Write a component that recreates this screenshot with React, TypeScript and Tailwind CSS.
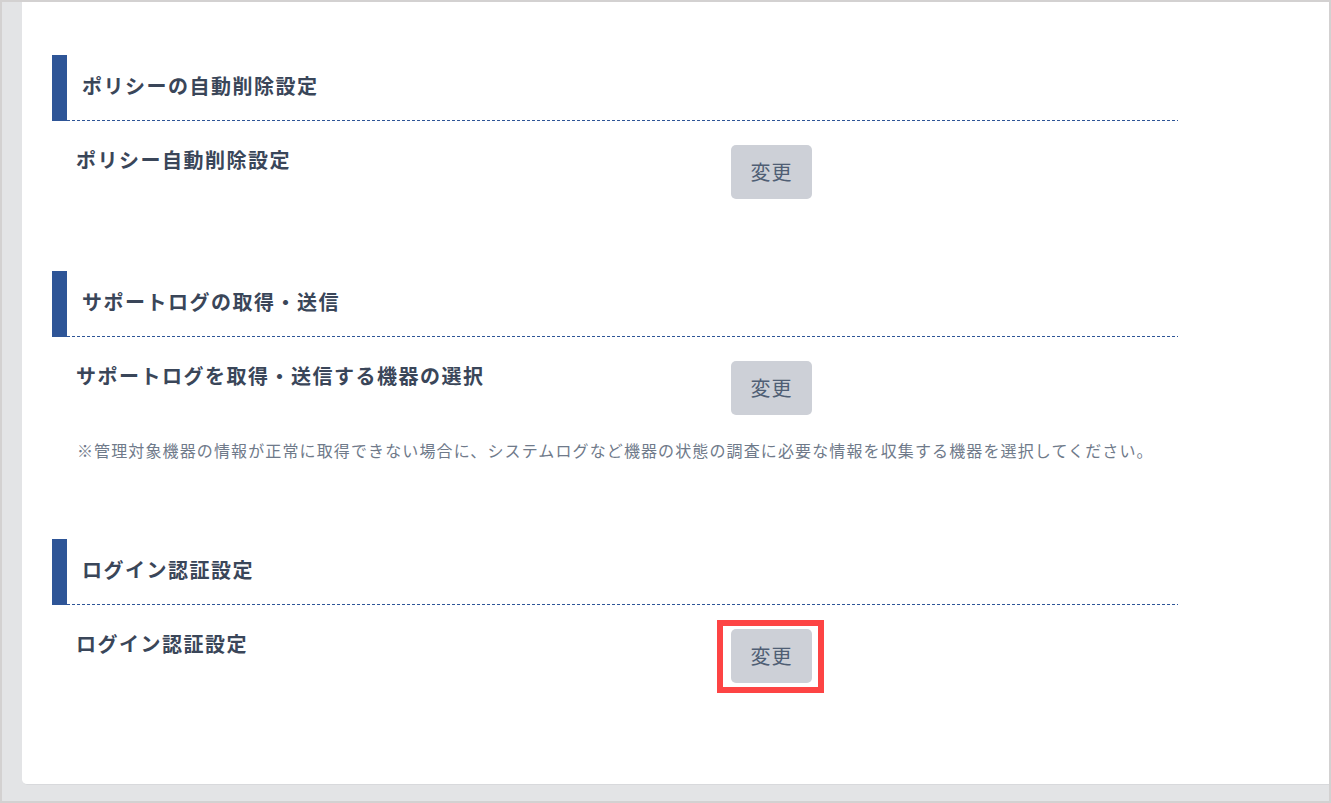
import React from "react";

const font = { fontFamily: '"Noto Sans CJK JP", "Noto Sans", sans-serif' };

function Header({ title }: { title: string }) {
  return (
    <div className="flex h-[66px] w-[1126px]">
      <div className="w-[15px] bg-[#2e5597]" />
      <div className="flex flex-1 flex-col">
        <div className="flex flex-1 items-center pb-[4px] pl-[15px]">
          <span className="text-[20px] font-bold tracking-[0.075em] text-[#3a4659]">{title}</span>
        </div>
        <div className="h-px w-full bg-[repeating-linear-gradient(90deg,#2e5597_0px,#2e5597_3px,#ffffff_3px,#ffffff_5px)]" />
      </div>
    </div>
  );
}

function Row({ label, highlight }: { label: string; highlight?: boolean }) {
  return (
    <div className="mt-[24px] flex pl-[24px]">
      <div className="w-[655px] text-[20px] font-bold leading-[30px] tracking-[0.075em] text-[#3a4659]">
        {label}
      </div>
      <div className="relative">
        <button className="flex h-[54px] w-[81px] items-center justify-center rounded-[5px] bg-[#cdd0d7] text-[20px] tracking-[0.05em] text-[#4f5e74]">
          変更
        </button>
        {highlight && (
          <div className="pointer-events-none absolute -left-[14px] -top-[9px] h-[73px] w-[107px] border-[6px] border-[#fd4444]" />
        )}
      </div>
    </div>
  );
}

export default function App() {
  return (
    <div
      className="flex h-[803px] w-[1331px] flex-col border-2 border-[#d3d1d1] bg-[#e3e4e6] pb-[16px] pl-[20px]"
      style={font}
    >
      <div className="flex-1 rounded-bl-[5px] border-b border-[#d8d9dc] bg-white pl-[30px] pt-[53px]">
        <section>
          <Header title="ポリシーの自動削除設定" />
          <Row label="ポリシー自動削除設定" />
        </section>
        <section className="mt-[72px]">
          <Header title="サポートログの取得・送信" />
          <Row label="サポートログを取得・送信する機器の選択" />
          <p className="mt-[22px] pl-[25px] text-[16px] leading-[26px] tracking-[0.07em] text-[#6f7a8a]">
            ※管理対象機器の情報が正常に取得できない場合に、システムログなど機器の状態の調査に必要な情報を収集する機器を選択してください。
          </p>
        </section>
        <section className="mt-[76px]">
          <Header title="ログイン認証設定" />
          <Row label="ログイン認証設定" highlight />
        </section>
      </div>
    </div>
  );
}
